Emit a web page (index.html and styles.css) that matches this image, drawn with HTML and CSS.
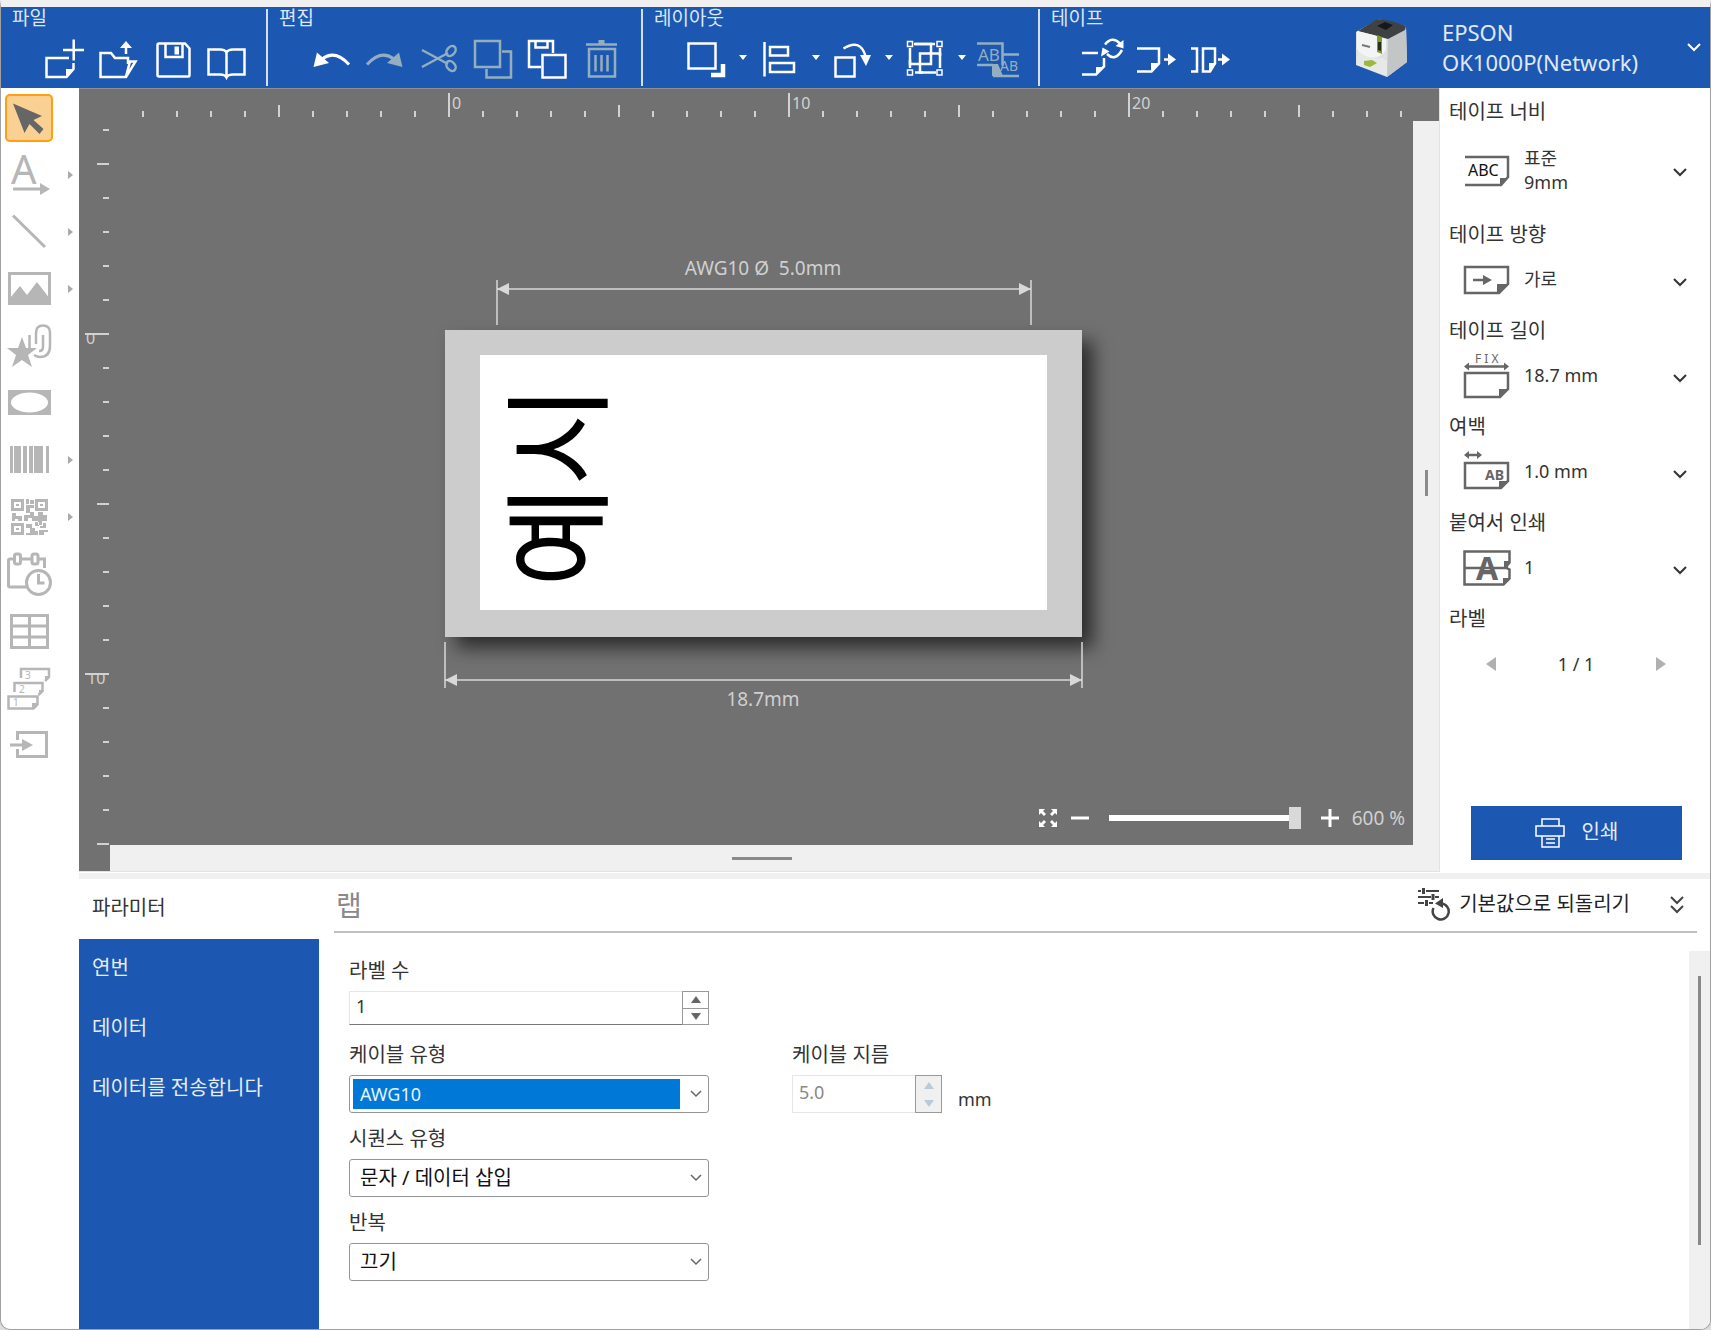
FILE: index.html
```html
<!DOCTYPE html>
<html lang="ko">
<head>
<meta charset="utf-8">
<title>Label Editor</title>
<link rel="stylesheet" href="styles.css">
</head>
<body>
<div class="window">
  <header class="ribbon">
    <section class="group">
      <h2 class="group-title">파일</h2>
      <div class="group-tools">
        <button class="cmd" aria-label="새로 만들기"><svg viewBox="0 0 44 44"><path d="M27 22H4.500v19h20l7-8v-6"/><path class="fill" d="M24 41v-8h8z"/><path d="M31.700 3.500v21M21 14h21"/></svg></button>
        <button class="cmd" aria-label="열기"><svg viewBox="0 0 44 44"><path d="M32 28v-6H19l-4-5H4.500v24h25.500l9.500-15.500h-5.500l-4 15"/><path d="M30 10v8"/><path class="fill" d="M30 5l6 7H24z"/></svg></button>
        <button class="cmd" aria-label="저장"><svg viewBox="0 0 44 44"><path d="M9 7.500h26l4.500 5v27q0 1-1 1H9q-1.500 0-1.500-1.500V9q0-1.500 1.500-1.500z"/><path d="M15.500 8v13h17V8"/><path class="fill" d="M24.500 10.500h4.500v8h-4.500z"/></svg></button>
        <button class="cmd" aria-label="카탈로그"><svg viewBox="0 0 44 44"><path d="M4.500 13.500v25H16q5 0 6.500 3 1.500-3 6.500-3h11.500v-25H29q-5 0-6.500 3-1.500-3-6.500-3zM22.500 16v24"/></svg></button>
      </div>
    </section>
    <section class="group">
      <h2 class="group-title">편집</h2>
      <div class="group-tools">
        <button class="cmd" aria-label="실행 취소"><svg viewBox="0 0 44 44"><path class="thick" d="M13 23q13-10 27 5.500"/><path class="fill" d="M4.500 31l3.500-14.500L20 27z"/></svg></button>
        <button class="cmd off" aria-label="다시 실행"><svg viewBox="0 0 44 44"><path class="thick" d="M31 23q-13-10-27 5.500"/><path class="fill" d="M39.500 31L36 16.500 24 27z"/></svg></button>
        <button class="cmd off" aria-label="잘라내기"><svg viewBox="0 0 44 44"><path d="M5 14l26 14M5 31l26-14"/><ellipse cx="34" cy="15" rx="5.500" ry="4" transform="rotate(-50 34 15)"/><ellipse cx="34" cy="30" rx="5.500" ry="4" transform="rotate(50 34 30)"/></svg></button>
        <button class="cmd off" aria-label="복사"><svg viewBox="0 0 44 44"><path d="M4 5h25v26H4zM31 15.500h9v26H15.500V33"/></svg></button>
        <button class="cmd" aria-label="붙여넣기"><svg viewBox="0 0 44 44"><path d="M16 31H4V5h24v12M10.500 5v6.500h12V5M17.500 19h23v22.500h-23z"/></svg></button>
        <button class="cmd off" aria-label="삭제"><svg viewBox="0 0 44 44"><path d="M7 8.500h31"/><path class="fill" d="M19.500 4h6v4h-6z"/><path d="M10 13h26v27.500H10zM16.500 19v16.500M22.500 19v16.500M28.500 19v16.500"/></svg></button>
      </div>
    </section>
    <section class="group">
      <h2 class="group-title">레이아웃</h2>
      <div class="group-tools">
        <button class="cmd" aria-label="순서"><svg viewBox="0 0 44 44"><path d="M4.500 7.500h27v25h-27z"/><path class="heavy" d="M39 28v11H27"/></svg></button>
        <button class="more" aria-label="순서 메뉴"><svg viewBox="0 0 8 6"><path d="M0 0h8L4 5z"/></svg></button>
        <button class="cmd" aria-label="맞춤"><svg viewBox="0 0 44 44"><path d="M7.500 6v34.500M13 11h18v8.500H13zM13 27h24v9H13z"/></svg></button>
        <button class="more" aria-label="맞춤 메뉴"><svg viewBox="0 0 8 6"><path d="M0 0h8L4 5z"/></svg></button>
        <button class="cmd" aria-label="회전"><svg viewBox="0 0 44 44"><path d="M5.500 21.500h19v19h-19zM13.500 12.500Q30 2 35.500 20"/><path class="fill" d="M30 19h11l-5 11z"/></svg></button>
        <button class="more" aria-label="회전 메뉴"><svg viewBox="0 0 8 6"><path d="M0 0h8L4 5z"/></svg></button>
        <button class="cmd" aria-label="그룹"><svg viewBox="0 0 44 44"><path d="M11 8h17v20H7V12M33 36.500H17V17.500h20V32"/><path d="M12 8h20M37 12v8M12 36.500h8M7 24v8"/><path class="thin" d="M4.500 5.500h5v5h-5zM34 5.500h5v5h-5zM4.500 34h5v5h-5zM34 34h5v5h-5z"/></svg></button>
        <button class="more" aria-label="그룹 메뉴"><svg viewBox="0 0 8 6"><path d="M0 0h8L4 5z"/></svg></button>
        <button class="cmd off" aria-label="텍스트 분할"><svg viewBox="0 0 44 44"><path d="M1 7.500h25.500v22M1 29h16M27 18.500h16M17 40h26"/><path class="fill" d="M16 28h6l5 12H16z"/><text x="2" y="25" font-size="17">AB</text><text x="24" y="35" font-size="14">AB</text></svg></button>
      </div>
    </section>
    <section class="group">
      <h2 class="group-title">테이프</h2>
      <div class="group-tools">
        <button class="cmd" aria-label="테이프 교체"><svg viewBox="0 0 44 44"><path d="M1 17h16M1 38.500h14l8-8V22"/><path class="fill" d="M15 39v-8h8z"/><path d="M24 8.500q7-9 15-1M41 14q-7 12-15 4"/><path class="fill" d="M42.500 4v8.500l-8-2.500zM20 20.500l1.500-9 7 4z"/></svg></button>
        <button class="cmd" aria-label="공급 및 절단"><svg viewBox="0 0 44 44"><path d="M2 12.500h22v15l-7.500 8H2M29 23.500h6"/><path class="fill" d="M16 36v-9h8zM33 17.500l8 6-8 6z"/></svg></button>
        <button class="cmd" aria-label="테이프 공급"><svg viewBox="0 0 44 44"><path d="M2 12.500h6v23H2M14 12.500h12v15l-5 8h-7zM29 23.500h6"/><path class="fill" d="M20 36v-9h6zM33 17.500l8 6-8 6z"/></svg></button>
      </div>
    </section>
    <button class="device">
      <svg class="printer" viewBox="0 0 54 60">
        <path d="M1 14L23 1l28 7 1 36-20 15L1 47z" fill="#dfe1e1"/>
        <path d="M33 19L51 9l1 35-20 15z" fill="#c3c6c7"/>
        <path d="M3 13L22 1q14 1 29 7l-1 4-17 9Q18 17 3 13z" fill="#3f4244"/>
        <path d="M22 8l8-4 8 3-7 5z" fill="#16181a"/>
        <path d="M2 13q15 3 29 8v11q-7 10-18 7Q5 37 2 31z" fill="#f3f4f4"/>
        <path d="M3 33q10 9 24 7l5 3v15L2 47z" fill="#e7e9e9"/>
        <path d="M22 17l5 2v17l-5-2z" fill="#7d9d27"/><path d="M23 24h3v9l-3-1z" fill="#26301c"/>
        <path d="M9 43l8-1 5 3-7 4-6-2z" fill="#9bb83a"/>
        <path d="M7 27l8 2" stroke="#777" stroke-width="2"/>
      </svg>
      <span class="device-name">EPSON<br>OK1000P(Network)</span>
      <svg class="chevron" viewBox="0 0 14 9"><path d="M1 1l6 6 6-6"/></svg>
    </button>
  </header>

  <div class="body">
    <nav class="toolbox" aria-label="도구">
      <div class="tool"><button class="tool-btn active" aria-label="선택"><svg viewBox="0 0 48 48"><path class="fill" d="M8 9.500L37 22l-8.500 4 10 9-4 5-10-10-5 9z"/></svg></button></div>
      <div class="tool"><button class="tool-btn" aria-label="텍스트"><svg viewBox="0 0 48 48"><text x="6" y="33" font-size="40">A</text><path d="M8 38h28"/><path class="fill" d="M35 32l10 6-10 6z"/></svg></button><svg class="side" viewBox="0 0 5 8"><path d="M0 0l5 4-5 4z"/></svg></div>
      <div class="tool"><button class="tool-btn" aria-label="선"><svg viewBox="0 0 48 48"><path d="M8 7.500L40 39"/></svg></button><svg class="side" viewBox="0 0 5 8"><path d="M0 0l5 4-5 4z"/></svg></div>
      <div class="tool"><button class="tool-btn" aria-label="이미지"><svg viewBox="0 0 48 48"><path d="M4.500 8.500h40v30h-40z"/><path class="fill" d="M5 33l10-12 7 9 10-13 13 17v5H5z"/></svg></button><svg class="side" viewBox="0 0 5 8"><path d="M0 0l5 4-5 4z"/></svg></div>
      <div class="tool"><button class="tool-btn" aria-label="기호"><svg viewBox="0 0 48 48"><path class="fill" d="M17 15l4 11h11l-9 7 4 12-10-7-10 7 4-12-9-7h11z"/><path class="line" d="M24.500 26V13M31 22V11q0-7.500 7-7.500t7 7.500v13q0 11-10 11-3 0-6-2M38 13v12q0 4-4 4"/></svg></button></div>
      <div class="tool"><button class="tool-btn" aria-label="프레임"><svg viewBox="0 0 48 48"><path class="fill" fill-rule="evenodd" d="M3 11h43v25H3zM6 23.500a18.500 10 0 0 0 37 0a18.500 10 0 0 0-37 0z"/></svg></button></div>
      <div class="tool"><button class="tool-btn" aria-label="바코드"><svg viewBox="0 0 48 48"><path class="fill" d="M5 10h3v27H5zM9 10h7v27H9zM18 10h4v27h-4zM24 10h4v27h-4zM29 10h9v27h-9zM41 10h3v27h-3z"/></svg></button><svg class="side" viewBox="0 0 5 8"><path d="M0 0l5 4-5 4z"/></svg></div>
      <div class="tool"><button class="tool-btn" aria-label="QR 코드"><svg viewBox="0 0 48 48"><path class="fill" fill-rule="evenodd" d="M6 6h13v12H6zM9 9v6h7V9zM30 6h13v12H30zM33 9v6h7V9zM6 30h13v12H6zM9 33v6h7v-6zM11 11h3v2h-3zM35 11h3v2h-3zM11 35h3v2h-3zM21 6h3v5h-3zM25 7h4v4h-4zM21 12h8v3h-4v5h-4zM7 20h4v3h6v5h-4v-2h-3v2H7zM19 22h6v-3h4v4h4v-4h5v3h4v6h-5v4h-4v-4h-6v-3h-4v3h-4zM21 31h6v4h3v3h3v4H21v-2h4v-5h-4zM30 29h4v4h4v-3h3v5h-6v-2h-5zM34 37h9v2h-4v3h-5z"/></svg></button><svg class="side" viewBox="0 0 5 8"><path d="M0 0l5 4-5 4z"/></svg></div>
      <div class="tool"><button class="tool-btn" aria-label="날짜와 시간"><svg viewBox="0 0 48 48"><path d="M9 9H5q-1.500 0-1.500 1.500v25Q3.500 37 5 37h16M16 9h11M33 9h6.500v9"/><rect x="9.500" y="4" width="6" height="10" rx="2"/><rect x="27" y="4" width="6" height="10" rx="2"/><circle cx="33.500" cy="32.500" r="12"/><path d="M33.500 24v9h6"/></svg></button></div>
      <div class="tool"><button class="tool-btn" aria-label="표"><svg viewBox="0 0 48 48"><path d="M6.500 8.500h36v32h-36zM24.500 8.500v32M6.500 19h36M6.500 30h36"/></svg></button></div>
      <div class="tool"><button class="tool-btn" aria-label="연번"><svg viewBox="0 0 48 48"><path class="line" d="M16 14V5h28v8l-4 4M9.500 28v-9h28v8l-4 4M3.500 32.500h29v8l-4 4h-25z"/><path class="fill" d="M40 17v-5h5zM34 31v-5h5zM27 45v-6h6z"/><text x="20" y="15" font-size="10">3</text><text x="14" y="29" font-size="10">2</text><text x="8" y="42" font-size="10">1</text></svg></button></div>
      <div class="tool"><button class="tool-btn" aria-label="가져오기"><svg viewBox="0 0 48 48"><path d="M12.500 19v-7.500h29v24h-29V28M5 24h13"/><path class="fill" d="M17 18l11 6-11 6z"/></svg></button></div>
    </nav>

    <div class="main">
      <div class="upper">
        <div class="stage">
          <div class="ruler-h">
            <svg viewBox="110 89 1303 32" width="1303" height="32">
              <defs>
                <pattern id="mmX" x="448" y="0" width="34" height="200" patternUnits="userSpaceOnUse"><path d="M0 111h2v6H0z"/></pattern>
                <pattern id="fiveX" x="448" y="0" width="170" height="200" patternUnits="userSpaceOnUse"><path d="M0 105h2v12H0z"/></pattern>
              </defs>
              <path d="M142 100h1271v20H142z" fill="url(#mmX)"/>
              <path d="M142 100h1271v20H142z" fill="url(#fiveX)"/>
              <path d="M448 93h2v24h-2zM788 93h2v24h-2zM1128 93h2v24h-2z"/>
              <text x="452" y="109">0</text><text x="792" y="109">10</text><text x="1132" y="109">20</text>
            </svg>
          </div>
          <div class="ruler-v">
            <svg viewBox="80 121 30 724" width="30" height="724">
              <defs>
                <pattern id="mmY" x="0" y="333" width="200" height="34" patternUnits="userSpaceOnUse"><path d="M103 0h6v2h-6z"/></pattern>
                <pattern id="fiveY" x="0" y="333" width="200" height="170" patternUnits="userSpaceOnUse"><path d="M97 0h12v2H97z"/></pattern>
                <clipPath id="below"><path d="M80 335h30v30H80zM80 675h30v30H80z"/></clipPath>
              </defs>
              <path d="M80 125h30v720H80z" fill="url(#mmY)"/>
              <path d="M80 125h30v720H80z" fill="url(#fiveY)"/>
              <path d="M85 333h24v2H85zM85 673h24v2H85z"/>
              <g clip-path="url(#below)"><text x="86" y="344">0</text><text x="87" y="684">10</text></g>
            </svg>
          </div>
          <div class="canvas">
            <svg class="drawing" viewBox="110 121 1303 724" width="1303" height="724">
              <rect class="tape" x="445" y="330" width="637" height="307"/>
              <rect x="480" y="355" width="567" height="255" fill="#fff"/>
              <text class="label-text" transform="translate(599 587) rotate(-90)">예시</text>
              <path class="dim" d="M497 280v45M1031 280v45M497 289h534M445 642v46M1082 642v46M445 680h637"/>
              <path class="head" d="M497 289l12-6v12zM1031 289l-12-6v12zM445 680l12-6v12zM1082 680l-12-6v12z"/>
              <text class="dim-text" x="763" y="275" xml:space="preserve">AWG10 Ø  5.0mm</text>
              <text class="dim-text" x="763" y="706">18.7mm</text>
            </svg>
            <div class="zoom">
              <button class="zoom-btn fit" aria-label="화면에 맞춤"><svg viewBox="0 0 20 20"><path d="M1 7V1h6L5 3l3 3-2 2-3-3zM19 7V1h-6l2 2-3 3 2 2 3-3zM1 13v6h6l-2-2 3-3-2-2-3 3zM19 13v6h-6l2-2-3-3 2-2 3 3z"/></svg></button>
              <button class="zoom-btn" aria-label="축소"><svg viewBox="0 0 20 20"><path d="M1 8.500h18v3H1z"/></svg></button>
              <input class="zoom-range" type="range" min="50" max="600" value="600" aria-label="배율">
              <button class="zoom-btn" aria-label="확대"><svg viewBox="0 0 20 20"><path d="M1 8.500h7.500V1h3v7.500H19v3h-7.500V19h-3v-7.500H1z"/></svg></button>
              <output class="zoom-value">600 %</output>
            </div>
          </div>
          <div class="edge-right"><span class="grip-v"></span></div>
          <div class="edge-bottom"><span class="grip-h"></span></div>
        </div>

        <aside class="tape-panel">
          <section class="setting tall">
            <h3 class="setting-title">테이프 너비</h3>
            <button class="setting-row">
              <svg class="setting-icon" viewBox="0 0 48 48"><path d="M2 8h43v20l-7 8H2"/><path class="fill" d="M37 37v-8h8z"/><text class="mark" x="5" y="27" font-size="16">ABC</text></svg>
              <span class="setting-value">표준<br>9mm</span>
              <svg class="chevron" viewBox="0 0 14 9"><path d="M1 1l6 6 6-6"/></svg>
            </button>
          </section>
          <section class="setting">
            <label class="setting-title" for="dir">테이프 방향</label>
            <div class="setting-row">
              <svg class="setting-icon" viewBox="0 0 48 48"><path d="M2 9h43v17l-9 9H2zM10 22h12"/><path class="fill" d="M34 36V26h11zM20 17l9 5-9 5z"/></svg>
              <select class="setting-value" id="dir"><option>가로</option></select>
              <svg class="chevron" viewBox="0 0 14 9"><path d="M1 1l6 6 6-6"/></svg>
            </div>
          </section>
          <section class="setting">
            <label class="setting-title" for="len">테이프 길이</label>
            <div class="setting-row">
              <svg class="setting-icon" viewBox="0 0 48 48"><text x="12" y="9" font-size="12">F I X</text><path d="M2 19h43v16l-8 8H2zM5 12.500h37"/><path class="fill" d="M36 44v-9h9zM1 12.500l5-4v8zM46 12.500l-5-4v8z"/></svg>
              <select class="setting-value" id="len"><option>18.7 mm</option></select>
              <svg class="chevron" viewBox="0 0 14 9"><path d="M1 1l6 6 6-6"/></svg>
            </div>
          </section>
          <section class="setting">
            <label class="setting-title" for="margin">여백</label>
            <div class="setting-row">
              <svg class="setting-icon" viewBox="0 0 48 48"><path d="M2 13h43v18l-7 7H2zM4 5h12"/><path class="fill" d="M36 39v-8h9zM1 5l5-4v8zM19 5l-5-4v8z"/><text class="bold" x="22" y="30" font-size="14">AB</text></svg>
              <select class="setting-value" id="margin"><option>1.0 mm</option></select>
              <svg class="chevron" viewBox="0 0 14 9"><path d="M1 1l6 6 6-6"/></svg>
            </div>
          </section>
          <section class="setting">
            <label class="setting-title" for="join">붙여서 인쇄</label>
            <div class="setting-row">
              <svg class="setting-icon" viewBox="0 0 48 48"><path d="M1.500 5.500h45v11l-4 5 4 2v9l-6 6h-39zM1 22h44"/><path class="fill" d="M41 15h6l-6 7zM40 39v-7h7z"/><text class="bold" x="13" y="34" font-size="32">A</text></svg>
              <select class="setting-value" id="join"><option>1</option></select>
              <svg class="chevron" viewBox="0 0 14 9"><path d="M1 1l6 6 6-6"/></svg>
            </div>
          </section>
          <section class="setting">
            <h3 class="setting-title">라벨</h3>
            <div class="pager">
              <button class="page-btn" aria-label="이전 라벨"><svg viewBox="0 0 10 14"><path d="M10 0v14L0 7z"/></svg></button>
              <span>1 / 1</span>
              <button class="page-btn" aria-label="다음 라벨"><svg viewBox="0 0 10 14"><path d="M0 0v14l10-7z"/></svg></button>
            </div>
          </section>
          <button class="print">
            <svg viewBox="0 0 30 30"><path d="M7 8V1h17v7M7 18H1V8h28v10h-5M7 18h17v11H7zM11 21h9M11 25h9"/></svg>
            <span>인쇄</span>
          </button>
        </aside>
      </div>

      <div class="lower">
        <nav class="tabs">
          <a class="tab current" href="#param">파라미터</a>
          <a class="tab" href="#serial">연번</a>
          <a class="tab" href="#data">데이터</a>
          <a class="tab" href="#send">데이터를 전송합니다</a>
        </nav>
        <section class="params" id="param">
          <header class="params-head">
            <h1 class="params-title">랩</h1>
            <button class="reset">
              <svg viewBox="0 0 32 34"><path d="M0 3h3M8 3h13M0 9h13M17 9h4M0 15h6M11 15h4"/><path class="bar" d="M5.500 0v6M15 6v6M8.500 12v6"/><path class="ring" d="M15.500 20a8 8 0 1 0 8-4.500"/><path class="tip" d="M17 15.500l8-5.500v10z"/></svg>
              <span>기본값으로 되돌리기</span>
            </button>
            <button class="collapse" aria-label="접기"><svg viewBox="0 0 14 18"><path d="M1 1l6 6 6-6M1 10l6 6 6-6"/></svg></button>
          </header>
          <div class="params-body">
            <form class="form">
              <div class="field">
                <label for="count">라벨 수</label>
                <div class="spin">
                  <input id="count" type="number" value="1">
                  <div class="spin-btns">
                    <button type="button" aria-label="증가"><svg viewBox="0 0 10 7"><path d="M5 0l5 7H0z"/></svg></button>
                    <button type="button" aria-label="감소"><svg viewBox="0 0 10 7"><path d="M5 7l5-7H0z"/></svg></button>
                  </div>
                </div>
              </div>
              <div class="field first-col">
                <label for="cable">케이블 유형</label>
                <div class="combo">
                  <select id="cable" class="selected"><option>AWG10</option></select>
                  <svg viewBox="0 0 12 8"><path d="M1 1l5 5 5-5"/></svg>
                </div>
              </div>
              <div class="field">
                <label for="diameter">케이블 지름</label>
                <div class="with-unit">
                  <div class="spin disabled">
                    <input id="diameter" type="number" value="5.0" disabled>
                    <div class="spin-btns">
                      <button type="button" disabled aria-label="증가"><svg viewBox="0 0 10 7"><path d="M5 0l5 7H0z"/></svg></button>
                      <button type="button" disabled aria-label="감소"><svg viewBox="0 0 10 7"><path d="M5 7l5-7H0z"/></svg></button>
                    </div>
                  </div>
                  <span class="unit">mm</span>
                </div>
              </div>
              <div class="field first-col">
                <label for="seq">시퀀스 유형</label>
                <div class="combo">
                  <select id="seq"><option>문자 / 데이터 삽입</option></select>
                  <svg viewBox="0 0 12 8"><path d="M1 1l5 5 5-5"/></svg>
                </div>
              </div>
              <div class="field first-col">
                <label for="repeat">반복</label>
                <div class="combo">
                  <select id="repeat"><option>끄기</option></select>
                  <svg viewBox="0 0 12 8"><path d="M1 1l5 5 5-5"/></svg>
                </div>
              </div>
            </form>
            <div class="scroll"><span class="scroll-thumb"></span></div>
          </div>
        </section>
      </div>
    </div>
  </div>
</div>
</body>
</html>
```
FILE: styles.css
```css
* { box-sizing: border-box; }

:root {
  --blue: #1c58b1;
  --stage: #717171;
  --light: #f0f0f0;
  --ink: #333;
  --icon: #666;
  --muted: #b6b6b6;
}

body {
  margin: 0;
  background: #ddd;
  color: var(--ink);
  font: 20px/24px "Noto Sans", "Noto Sans CJK KR", sans-serif;
}

button, input, select {
  font: inherit;
  color: inherit;
  background: none;
  border: 0;
  padding: 0;
  margin: 0;
  border-radius: 0;
  appearance: none;
}

h1, h2, h3 { margin: 0; font-weight: 400; }
svg { display: block; flex: none; }

.window {
  min-height: 100vh;
  display: flex;
  flex-direction: column;
  background: #fff;
  border: 1px solid #a0a0a0;
  border-top: 7px solid var(--light);
  border-radius: 0 0 10px 10px;
  overflow: hidden;
}

/* Ribbon */
.ribbon {
  display: flex;
  height: 81px;
  background: var(--blue);
  color: #fff;
}

.group {
  position: relative;
  padding: 0 15px 0 36px;
}

.group:not(:nth-of-type(4))::after {
  content: "";
  position: absolute;
  right: 0;
  top: 2px;
  bottom: 2px;
  width: 2px;
  background: #d4dff0;
}

.group-title {
  margin-left: -25px;
  font-size: 19px;
  line-height: 23px;
  color: #dde6f4;
}

.group-tools { display: flex; }

.cmd {
  width: 54px;
  height: 56px;
  display: grid;
  place-items: center;
  color: #fff;
}

.cmd.off { color: #93aebf; }
.cmd svg { width: 44px; height: 44px; fill: none; stroke: currentColor; stroke-width: 2.5; }
.cmd .fill { fill: currentColor; stroke: none; }
.cmd .thick { stroke-width: 3; }
.cmd .heavy { stroke-width: 4.5; }
.cmd .thin { stroke-width: 1.5; fill: var(--blue); }
.cmd text { fill: currentColor; stroke: none; }

.more { width: 19px; display: grid; place-items: center; }
.more svg { width: 8px; height: 6px; fill: #fff; }

.device {
  flex: 1;
  max-width: 355px;
  margin-left: auto;
  padding-right: 9px;
  display: flex;
  align-items: center;
  text-align: left;
}

.printer { width: 54px; height: 60px; }
.device-name { flex: 1; margin-left: 33px; padding-bottom: 2px; font-size: 22px; line-height: 30px; color: #e0e8f5; }
.chevron { width: 14px; height: 9px; fill: none; stroke: currentColor; stroke-width: 2; }

/* Body */
.body { flex: 1; display: flex; }

.toolbox {
  width: 78px;
  padding: 6px 0 0 4px;
  display: flex;
  flex-direction: column;
  gap: 9px;
}

.tool { display: flex; align-items: center; gap: 15px; }
.tool-btn { width: 48px; height: 48px; color: var(--muted); }
.tool-btn.active {
  color: var(--icon);
  background: #fbd193;
  border-radius: 5px;
  box-shadow: inset 0 0 0 2px #ffa013;
}
.tool-btn svg { width: 48px; height: 48px; overflow: visible; fill: none; stroke: currentColor; stroke-width: 3; }
.tool-btn .fill { fill: currentColor; stroke: none; }
.tool-btn .line { stroke-width: 2.5; }
.tool-btn text { fill: currentColor; stroke: none; }
.side { width: 5px; height: 8px; fill: #aaa; }

.main { flex: 1; min-width: 0; display: flex; flex-direction: column; }
.upper { flex: 1; display: flex; border-bottom: 6px solid var(--light); }

/* Stage */
.stage {
  flex: 1;
  min-width: 0;
  display: grid;
  grid-template-columns: 31px 1fr 26px;
  grid-template-rows: 33px 1fr 26px;
  background: var(--stage);
  border-right: 1px solid #e2e2e2;
  border-bottom: 1px solid #e2e2e2;
  margin-bottom: 1px;
  box-shadow: inset 0 1px #8e8e8e;
}

.ruler-h { grid-area: 1 / 2; display: flex; align-items: flex-end; justify-content: center; }
.ruler-v { grid-area: 2 / 1; display: flex; align-items: center; justify-content: flex-end; }
.ruler-h svg, .ruler-v svg { fill: #d2d2d2; font-size: 16px; }

.canvas {
  grid-area: 2 / 2;
  position: relative;
  display: flex;
  align-items: center;
  justify-content: center;
  overflow: hidden;
}

.tape { fill: #ccc; filter: drop-shadow(11px 11px 9px rgba(0, 0, 0, .6)); }
.label-text { font-size: 110px; fill: #000; font-family: "Noto Sans CJK KR", sans-serif; }
.dim { fill: none; stroke: #d8d8d8; stroke-width: 1.5; }
.head { fill: #d8d8d8; }
.dim-text { font-size: 19px; fill: #d0d0d0; text-anchor: middle; white-space: pre; }

.zoom {
  position: absolute;
  right: 8px;
  bottom: 15px;
  display: flex;
  align-items: center;
  gap: 12px;
}

.zoom-btn { width: 20px; height: 20px; }
.zoom-btn svg { width: 20px; height: 20px; fill: #fff; }
.zoom-range { width: 192px; height: 22px; margin: 0 7px; }
.zoom-range::-webkit-slider-runnable-track { height: 6px; background: #fff; }
.zoom-range::-webkit-slider-thumb {
  appearance: none;
  width: 12px;
  height: 22px;
  margin-top: -8px;
  background: #d9d9d9;
}
.zoom-value { font-size: 19px; color: #d0d0d0; white-space: nowrap; }

.edge-right { grid-area: 2 / 3 / 4 / 4; padding-bottom: 26px; background: var(--light); display: grid; place-items: center; }
.edge-bottom { grid-area: 3 / 2; background: var(--light); display: grid; place-items: center; }
.grip-v { width: 3px; height: 26px; background: #8a8a8a; }
.grip-h { width: 60px; height: 3px; background: #8a8a8a; }

/* Tape settings */
.tape-panel {
  width: 270px;
  padding: 12px 0 13px;
  display: flex;
  flex-direction: column;
}

.setting { height: 96px; display: flex; flex-direction: column; }
.setting.tall { height: 123px; }
.setting-title { display: block; padding-left: 9px; font-size: 20px; }

.setting-row {
  flex: 1;
  width: 100%;
  padding: 0 23px 2px;
  display: flex;
  align-items: center;
  text-align: left;
}

.setting-icon { width: 48px; height: 48px; overflow: visible; fill: none; stroke: var(--icon); stroke-width: 2.5; }
.setting-icon .fill { fill: var(--icon); stroke: none; }
.setting-icon text { fill: var(--icon); stroke: none; }
.setting-icon .mark { fill: #111; }
.setting-icon .bold { font-weight: 700; }
.setting-value {
  flex: 1;
  min-width: 0;
  margin-left: 13px;
  padding-bottom: 6px;
  font-size: 18px;
}

.pager { flex: 1; padding: 0 44px 6px 46px; display: flex; align-items: center; justify-content: space-between; font-size: 18px; }
.page-btn svg { width: 10px; height: 14px; fill: #b0b0b0; }

.print {
  height: 54px;
  margin: auto 28px 0 31px;
  display: flex;
  align-items: center;
  justify-content: center;
  gap: 17px;
  background: var(--blue);
  color: #e6edf8;
}
.print svg { width: 30px; height: 30px; fill: none; stroke: #fff; stroke-width: 1.5; }
.print span { padding-bottom: 2px; }

/* Parameters */
.lower { display: flex; min-height: 450px; }

.tabs { width: 240px; background: var(--blue); }
.tab {
  display: flex;
  align-items: center;
  height: 60px;
  padding: 0 13px 2px;
  color: #e6edf8;
  text-decoration: none;
}
.tab.current { background: #fff; color: var(--ink); }

.params { flex: 1; padding-left: 15px; display: flex; flex-direction: column; }
.params-head {
  height: 54px;
  margin-right: 13px;
  padding: 0 13px 0 2px;
  display: flex;
  align-items: center;
  border-bottom: 2px solid #c0c0c0;
}
.params-title { font-size: 28px; line-height: 40px; color: #8a8a8a; }
.reset { margin-left: auto; display: flex; align-items: center; gap: 9px; color: #222; }
.reset svg { width: 32px; height: 34px; fill: none; stroke: #444; stroke-width: 2; }
.reset span { padding-bottom: 2px; }
.reset .bar { stroke-width: 3; }
.reset .ring { stroke-width: 2.5; }
.reset .tip { fill: #444; stroke: none; }
.collapse { margin-left: 40px; }
.collapse svg { width: 14px; height: 18px; fill: none; stroke: #444; stroke-width: 2; }

.params-body { flex: 1; display: flex; padding-top: 18px; }

.form {
  flex: 1;
  padding: 8px 0 0 15px;
  display: grid;
  grid-template-columns: 360px 1fr;
  grid-auto-rows: 70px;
  gap: 14px 83px;
  align-content: start;
}
.first-col { grid-column: 1; }
.field { display: flex; flex-direction: column; gap: 8px; }

.combo {
  height: 38px;
  padding: 3px;
  display: flex;
  align-items: center;
  border: 1px solid #959595;
  border-radius: 3px;
  color: #111;
}
.combo select { flex: 1; height: 30px; margin-right: 10px; padding: 0 7px 1px; }
.combo .selected { background: #0078d7; color: #e6f2fc; font-size: 18px; }
.combo svg { width: 12px; height: 8px; margin-right: 3px; fill: none; stroke: #666; stroke-width: 1.5; }

.spin { height: 34px; display: flex; border: 1px solid #e6e6e6; border-bottom-color: #777; }
.spin input { flex: 1; min-width: 0; padding: 0 6px 5px; font-size: 18px; appearance: textfield; }
.spin input::-webkit-inner-spin-button { display: none; }
.spin-btns { width: 27px; margin: -1px; display: flex; flex-direction: column; border: 1px solid #999; }
.spin-btns button { flex: 1; display: grid; place-items: center; }
.spin-btns button + button { border-top: 1px solid #999; }
.spin-btns svg { width: 10px; height: 7px; fill: #666; }
.spin.disabled { width: 150px; height: 38px; border-bottom-color: #e6e6e6; color: #888; }
.disabled .spin-btns { background: var(--light); }
.disabled .spin-btns button { border: 0; }
.disabled .spin-btns svg { fill: #b9cad9; }

.with-unit { display: flex; align-items: center; gap: 16px; }
.unit { padding-top: 10px; font-size: 18px; }

.scroll { width: 21px; padding-top: 25px; display: flex; justify-content: center; background: var(--light); }
.scroll-thumb { width: 3px; height: 269px; background: #888; }
```
